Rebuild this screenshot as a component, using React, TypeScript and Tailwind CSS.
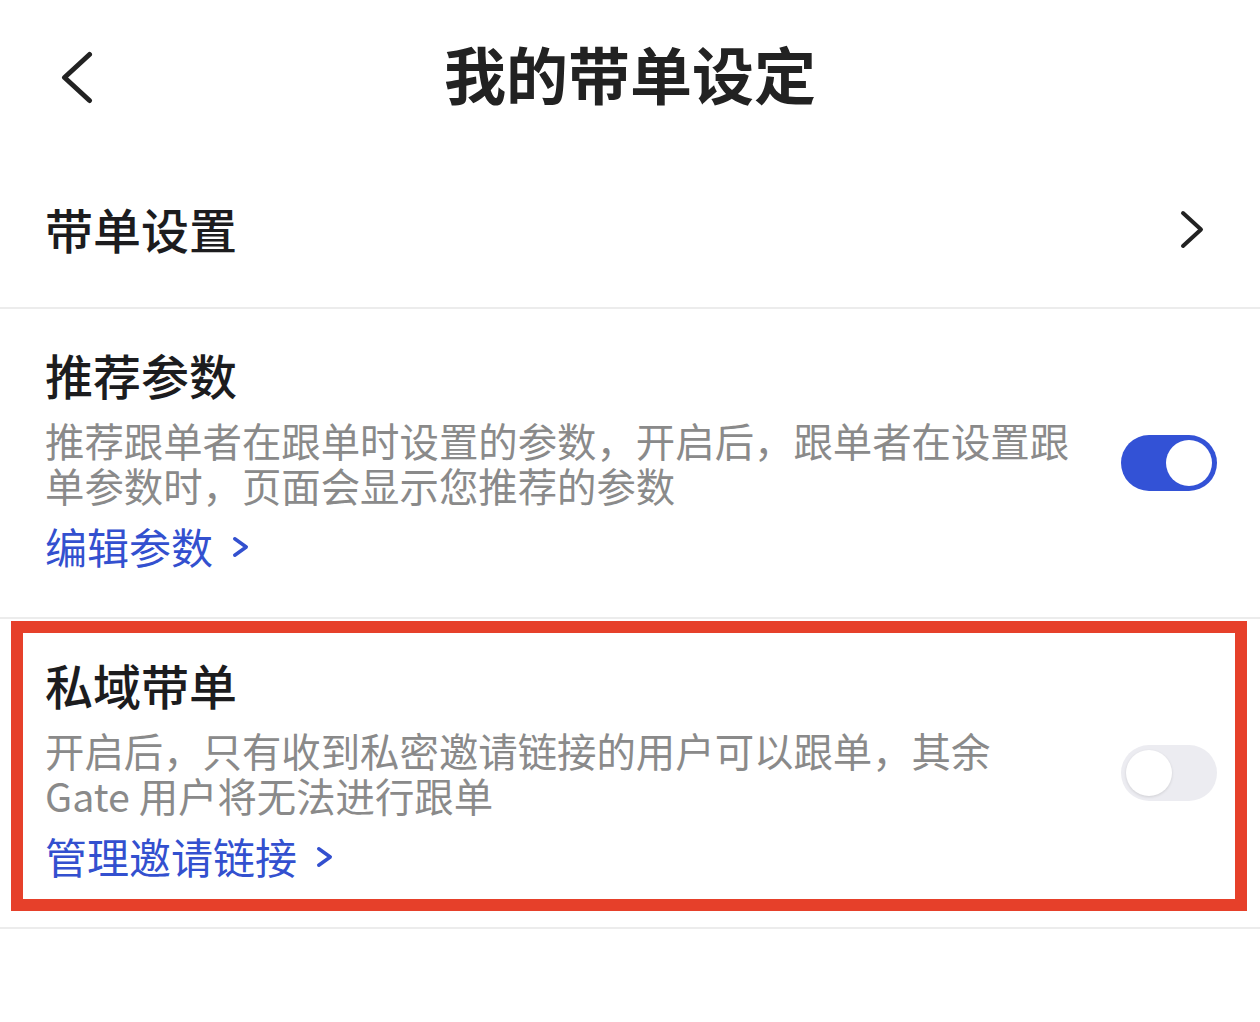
function Chevron({ className, dir = 'right', w = 20, h = 35, stroke = 4 }: { className?: string; dir?: 'left' | 'right'; w?: number; h?: number; stroke?: number }) {
  const p = stroke / 2 + 1;
  const d = dir === 'right' ? `M${p} ${p} L${w - p} ${h / 2} L${p} ${h - p}` : `M${w - p} ${p} L${p} ${h / 2} L${w - p} ${h - p}`;
  return (
    <svg className={className} width={w} height={h} viewBox={`0 0 ${w} ${h}`} fill="none">
      <path d={d} stroke="currentColor" strokeWidth={stroke} strokeLinecap="round" strokeLinejoin="round" />
    </svg>
  );
}

function Toggle({ on }: { on: boolean }) {
  return (
    <div className={`w-[96px] h-[56px] rounded-full p-[5px] flex shrink-0 ${on ? 'bg-[#3352d6] justify-end' : 'bg-[#ececf1] justify-start'}`}>
      <div className={`w-[46px] h-[46px] rounded-full bg-white ${on ? '' : 'shadow-[0_1px_3px_rgba(0,0,0,0.12)]'}`} />
    </div>
  );
}

function Section({ title, text, link, on }: { title: string; text: string; link: string; on: boolean }) {
  return (
    <div className="flex items-center h-[308px] pl-[45px] pr-[43px]">
      <div className="flex-1 pb-[9px]">
        <div className="text-[48px] leading-[56px] font-medium text-[#1c1c1e]">{title}</div>
        <p className="mt-[15px] text-[39.4px] leading-[45px] text-[#8a8a8a] whitespace-pre-line">{text}</p>
        <div className="mt-[14px] flex items-center gap-[19px] text-[42px] leading-[50px] text-[#3350cf]">
          <span>{link}</span>
          <Chevron w={17} h={22} stroke={3.5} className="mt-[2px]" />
        </div>
      </div>
      <Toggle on={on} />
    </div>
  );
}

export default function App() {
  return (
    <div className="w-[1260px] h-[1022px] bg-white font-['Noto_Sans_CJK_SC','Noto_Sans',sans-serif] text-[#1c1c1e]">
      <div className="grid grid-cols-[1fr_auto_1fr] items-center h-[154px]">
        <div className="pl-[61px] text-[#222]">
          <Chevron dir="left" w={32} h={53} stroke={5} />
        </div>
        <div className="text-[62px] font-bold leading-none text-[#222] mb-[8px]">我的带单设定</div>
        <div />
      </div>

      <div className="flex items-center justify-between h-[153px] pl-[45px] pr-[56px]">
        <span className="text-[48px] font-medium leading-none mb-[6px]">带单设置</span>
        <Chevron w={24} h={39} stroke={4} className="text-[#222] mb-[3px]" />
      </div>
      <div className="h-[2px] bg-[#ececec]" />

      <Section
        title="推荐参数"
        text={'推荐跟单者在跟单时设置的参数，开启后，跟单者在设置跟\n单参数时，页面会显示您推荐的参数'}
        link="编辑参数"
        on
      />
      <div className="h-[2px] bg-[#ececec]" />

      <div className="relative">
        <Section
          title="私域带单"
          text={'开启后，只有收到私密邀请链接的用户可以跟单，其余\nGate 用户将无法进行跟单'}
          link="管理邀请链接"
          on={false}
        />
        <div className="absolute top-[2px] left-[11px] right-[13px] bottom-[16px] border-[12px] border-[#e6402a] pointer-events-none" />
      </div>
      <div className="h-[2px] bg-[#ececec]" />
    </div>
  );
}
